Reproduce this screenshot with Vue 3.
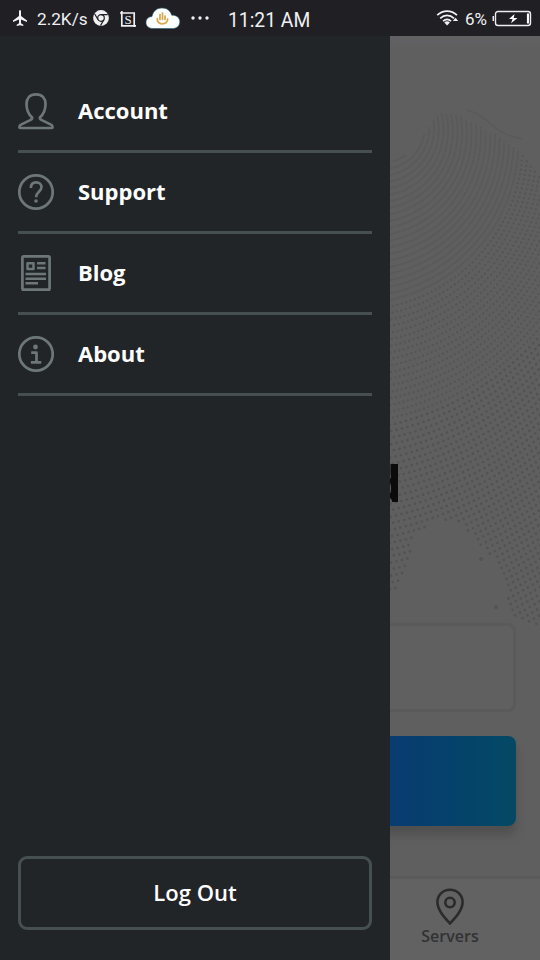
<script setup>
const items = [
  { id: 'account', label: 'Account' },
  { id: 'support', label: 'Support' },
  { id: 'blog', label: 'Blog' },
  { id: 'about', label: 'About' },
]

// Dotted globe: rings of dots around a drifting centre, clipped by its outline.
const outline = [
  [385, 165], [412, 152], [428, 128], [440, 112], [465, 118], [500, 138], [522, 154], [542, 175], [542, 630], [530, 622], [512, 615],
  [505, 585], [495, 560], [480, 545], [462, 524], [440, 520], [425, 528], [414, 535], [412, 560], [398, 590], [385, 596],
]
function inside(x, y) {
  let hit = false
  for (let i = 0, j = outline.length - 1; i < outline.length; j = i++) {
    const [ax, ay] = outline[i]
    const [bx, by] = outline[j]
    if ((ay > y) !== (by > y) && x < ((bx - ax) * (y - ay)) / (by - ay) + ax) hit = !hit
  }
  return hit
}
// Dots sit close together near the pole, so the rings there read as lines.
const bands = [
  { name: 'fine', from: 4, to: 28, spacing: 2.6 },
  { name: 'medium', from: 28, to: 46, spacing: 4.6 },
  { name: 'coarse', from: 46, to: 110, spacing: 5.6 },
]
const dots = bands.map(({ name, from, to, spacing }) => {
  let d = ''
  for (let k = from; k < to; k++) {
    const r = k * 6
    const cx = 392 - 0.22 * r
    const cy = 122 + 0.12 * r
    const n = Math.round((2 * Math.PI * r) / spacing)
    for (let i = 0; i < n; i++) {
      const a = (i / n) * 2 * Math.PI
      const x = cx + r * Math.cos(a)
      const y = cy + r * Math.sin(a)
      if (inside(x, y)) d += `M${x.toFixed(1)} ${y.toFixed(1)}h.01`
    }
  }
  return { name, d }
})
</script>

<template>
  <div class="screen">
    <header class="status">
      <svg class="plane" width="18" height="18" viewBox="0 0 18 18"><path d="M9 1c.7 0 1 .8 1 1.800V7l6 4.400v1.500l-6-2.400v3.700l2.300 1.600v1.100L9 16.200l-3.300.7v-1.100L8 14.200v-3.700l-6 2.400v-1.500L8 7V2.800C8 1.800 8.300 1 9 1z" fill="#f4f4f6" /></svg>
      <span class="speed">2.2K/s</span>
      <svg class="chrome" width="16" height="16" viewBox="0 0 16 16"><circle cx="8" cy="8" r="7.900" fill="#f0f0f2" /><circle cx="8" cy="8" r="3.300" fill="none" stroke="#1f1f24" stroke-width="1.200" /><path d="M8 4.700h6.700M5.100 9.700 1.700 4M10.800 9.700 7.500 15.600" stroke="#1f1f24" stroke-width="1.200" fill="none" /></svg>
      <svg class="shot" width="16" height="18" viewBox="0 0 16 18"><path d="M0 3h14.200v11.500M1.800 1v14.800H16M14.200 13v4" fill="none" stroke="#f0f0f2" stroke-width="1.700" /><text x="8" y="13.500" text-anchor="middle" class="shot-letter">S</text></svg>
      <svg class="cloud" width="36" height="23" viewBox="0 0 36 23"><path d="M8 21.500C3.500 21.500 1 19 1 15.500c0-3.300 2.500-5.700 6-5.900C8 4.200 12 1 17 1c5 0 8.500 2.800 9.700 7.200 4.700-.2 8.100 2.400 8.100 6.500 0 4-3 6.800-7.300 6.800z" fill="#fbfffe" stroke="#255b74" stroke-width=".6" /><path d="M12.300 11.500c-.3 3.400 1.700 5.300 4.600 5.300 3 0 5.600-1.600 5.800-4.800M15 12.500V7.500M17.500 12.500V6M20 12.500V9" fill="none" stroke="#dba54b" stroke-width="1.700" stroke-linecap="round" /></svg>
      <svg class="more" width="18" height="4" viewBox="0 0 18 4"><g fill="#f0f0f2"><circle cx="2" cy="2" r="1.700" /><circle cx="9" cy="2" r="1.700" /><circle cx="16" cy="2" r="1.700" /></g></svg>
      <span class="clock">11:21 AM</span>
      <svg class="wifi" width="23" height="16" viewBox="0 0 22 16"><g fill="none" stroke="#f0f0f2" stroke-width="1.700"><path d="M.7 5.200c5.700-5.400 14.100-5.400 19.800 0" /><path d="M3.700 8.300c4-3.800 9.800-3.800 13.800 0" /><path d="M6.600 11.200c2.400-2.200 5.600-2.200 8 0" /></g><path d="M7.800 12.400q2.800-2.100 5.600 0l-2.800 3z" fill="#f0f0f2" /><path d="m16.300 11 2.700-3.300 2.700 3.300z" fill="#f0f0f2" /></svg>
      <span class="percent">6%</span>
      <svg class="battery" width="40" height="17" viewBox="0 0 40 17"><path d="M1.300 6v5" stroke="#eee" stroke-width="1.500" /><rect x="3.500" y="1.500" width="35" height="14" rx="2.500" fill="none" stroke="#eee" stroke-width="1.400" /><path d="M36 3.500v10" stroke="#fff" stroke-width="2.200" /><path d="M22.500 4 17 9h3.500l-1.400 4.300L25.500 8h-3.800z" fill="#fff" /></svg>
    </header>

    <div class="stage">
      <main class="home">
        <svg class="globe" width="540" height="924" viewBox="0 36 540 924">
          <path v-for="band in dots" :key="band.name" :d="band.d" class="dot" :class="band.name" />
          <path d="M466 110q14 3 25 14t31 15" class="coast" />
          <path d="M496 607h.1M481 559h.1" class="dot island" />
        </svg>
        <div class="content">
          <h1>d</h1>
          <div class="field"></div>
          <div class="connect"></div>
        </div>
        <nav class="tabs">
          <div class="tab">
            <svg width="30" height="38" viewBox="0 0 30 38" fill="none" stroke="#2b2b2d"><path d="M15 1.700C7.800 1.700 2.400 7.200 2.400 14.100c0 7.900 7.200 15.500 12.600 21.400 5.400-5.900 12.600-13.500 12.600-21.400C27.600 7.200 22.200 1.700 15 1.700z" stroke-width="2.600" stroke-linejoin="round" /><circle cx="15" cy="14.500" r="4.700" stroke-width="2.600" /></svg>
            <span>Servers</span>
          </div>
        </nav>
      </main>

      <aside class="drawer">
        <ul class="menu">
          <li v-for="item in items" :key="item.id">
            <svg class="icon" width="36" height="38" viewBox="0 0 36 38">
              <path v-if="item.id === 'account'" d="M18 2.400c-6.500 0-9.500 4-9.500 9.600 0 6.200 2.200 10.500 5.600 13.500.3 1.200-.6 1.900-1.900 2.600L3 32.600c-1.100.6-1.600 1.600-1.600 2.600q0 .8.900.8h31.400q.9 0 .9-.8c0-1-.5-2-1.600-2.600l-9.200-4.500c-1.300-.7-2.200-1.400-1.900-2.600 3.400-3 5.600-7.300 5.600-13.500 0-5.600-3-9.600-9.500-9.600z" />
              <g v-else-if="item.id === 'support'"><circle cx="18" cy="19" r="16.700" /><path d="M12.900 14.900c0-3.300 2-5.500 5.300-5.500 3.200 0 5.300 2 5.300 4.700 0 2.500-1.300 3.600-3 5.100-1.600 1.400-2.400 2.500-2.400 5" /><circle class="solid" cx="18" cy="28" r="1.800" /></g>
              <g v-else-if="item.id === 'blog'"><rect x="4.400" y="2.400" width="27.200" height="33.200" rx="1.200" /><path d="M9.500 9.200h6V15h-6zM19 9.300h8.500M19 14h8.500M7.500 20h20.500M7.500 24.700h20.500M7.500 29.300h12.500" stroke-width="2.500" /></g>
              <g v-else><circle cx="18" cy="19" r="16.700" /><path d="M13.200 17.700h5.300v9.600M12.900 27.400h10.400" /><circle class="solid" cx="17.500" cy="12" r="2.400" /></g>
            </svg>
            <span>{{ item.label }}</span>
          </li>
        </ul>
        <button class="logout">Log Out</button>
      </aside>
    </div>
  </div>
</template>

<style>
body { margin: 0; background: #5f5f5f; }
</style>

<style scoped>
.screen { width: 540px; height: 960px; overflow: hidden; display: flex; flex-direction: column; background: #5f5f5f; font-family: "Open Sans", "Noto Sans", sans-serif; }
.status { height: 36px; flex: none; box-sizing: border-box; background: #1f1f24; color: #f0f0f2; display: flex; align-items: center; padding: 2px 8px 0 11px; font-family: Roboto, sans-serif; white-space: nowrap; }
.status svg { flex: none; }
.plane { margin-bottom: 2px; }
.speed { width: 56px; margin-left: 8px; font-size: 17.2px; }
.chrome { margin-bottom: 2px; }
.shot { margin-left: 11px; margin-bottom: 1px; }
.shot-letter { font: 13px "Liberation Serif", serif; fill: #f0f0f2; }
.cloud { margin-left: 9px; margin-bottom: 2px; }
.more { margin-left: 10px; margin-bottom: 3px; }
.clock { margin-left: 19px; font-size: 19.3px; margin-top: 2px; }
.wifi { margin-left: auto; margin-bottom: 2px; }
.percent { margin-left: 6px; width: 24px; font-size: 17px; }
.battery { margin-left: 3px; margin-bottom: 1px; }
.stage { flex: 1; min-height: 0; display: grid; grid-template-columns: 540px; grid-template-rows: 924px; }
.home { grid-area: 1 / 1; display: grid; grid-template-rows: 840px 84px; grid-template-columns: 540px; background: linear-gradient(#626164, #5f5f5f 12px); }
.globe { grid-area: 1 / 1 / 3 / 2; }
.dot { fill: none; stroke-linecap: round; }
.fine { stroke-width: 2.2; stroke: #585958; }
.medium { stroke-width: 2.4; stroke: #555655; }
.coarse { stroke-width: 2.7; stroke: #535353; }
.island { stroke-width: 4; stroke: #545454; }
.coast { fill: none; stroke: #595a5a; stroke-width: 1.5; }
.content { grid-area: 1 / 1; display: flex; flex-direction: column; padding: 413px 24px 0; }
h1 { margin: 0 114px 0 0; height: 68px; line-height: 68px; font-size: 50px; font-weight: 700; text-align: right; color: #0b0b0b; }
.field { height: 89px; margin-top: 106px; box-sizing: border-box; border: 3px solid #5a5a5a; border-radius: 8px; background: #606060; }
.connect { height: 90px; margin-top: 24px; border-radius: 8px; background: linear-gradient(90deg, #073d70 0 78%, #044866 98%); box-shadow: 0 9px 9px #46464699; }
.tabs { grid-area: 2 / 1; box-sizing: border-box; border-top: 3px solid #5a5a5a; background: #626262; display: flex; justify-content: flex-end; }
.tab { width: 180px; padding-top: 9px; display: flex; flex-direction: column; align-items: center; color: #323234; font-size: 16px; line-height: 20px; font-weight: 600; }
.drawer { grid-area: 1 / 1; z-index: 1; width: 390px; box-sizing: border-box; padding: 36px 18px 30px; background: #222528; color: #fff; display: flex; flex-direction: column; }
.menu { margin: 0; padding: 0; list-style: none; }
.menu li { height: 81px; box-sizing: border-box; border-bottom: 3px solid #465050; display: flex; align-items: center; gap: 24px; font-size: 22px; font-weight: 700; line-height: 30px; }
.menu span { padding-bottom: 2px; }
.icon { flex: none; fill: none; stroke: #6e7777; stroke-width: 2.7; stroke-linejoin: round; }
.icon .solid { fill: #6e7777; stroke: none; }
.logout { margin-top: auto; height: 74px; box-sizing: border-box; border: 3px solid #465050; border-radius: 9px; background: transparent; color: #fff; font: 600 22px/30px "Open Sans", "Noto Sans", sans-serif; padding: 0 0 2px; }
</style>
